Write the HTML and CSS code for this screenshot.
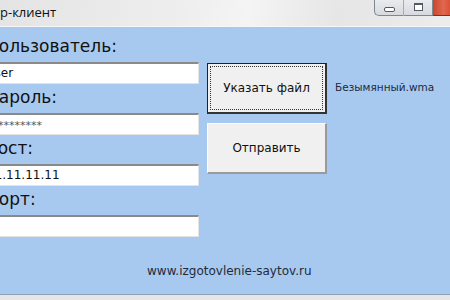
FILE: index.html
```html
<!DOCTYPE html>
<html lang="ru">
<head>
<meta charset="utf-8">
<link rel="stylesheet" href="styles.css">
</head>
<body>
<div class="window">
  <div class="titlebar">
    <div class="title">р-клиент</div>
    <div class="controls">
      <div class="ctl ctl-min"><span class="min-icon"></span></div>
      <div class="ctl ctl-max"><span class="max-icon"></span></div>
      <div class="ctl ctl-close"></div>
    </div>
  </div>
  <div class="client">
    <div class="main">
      <div class="form">
        <div class="label">Пользователь:</div>
        <div class="input">user</div>
        <div class="label">Пароль:</div>
        <div class="input pass">**********</div>
        <div class="label">Хост:</div>
        <div class="input">11.11.11.11</div>
        <div class="label">Порт:</div>
        <div class="input"></div>
      </div>
      <div class="buttons">
        <div class="btn btn-focus"><span class="focus-ring">Указать файл</span></div>
        <div class="btn">Отправить</div>
      </div>
      <div class="file">Безымянный.wma</div>
    </div>
    <div class="site">www.izgotovlenie-saytov.ru</div>
  </div>
  <div class="bottom"></div>
</div>
</body>
</html>
```

FILE: styles.css
```css
html, body {
  margin: 0;
  padding: 0;
  width: 450px;
  height: 300px;
  overflow: hidden;
  background: #e8e8e8;
}
.window {
  width: 450px;
  height: 300px;
  display: flex;
  flex-direction: column;
  font-family: "DejaVu Sans", Tahoma, sans-serif;
  color: #111;
}
.titlebar {
  height: 27px;
  flex: none;
  display: flex;
  justify-content: space-between;
  align-items: flex-start;
  background: linear-gradient(100deg, #e4e4e4 0%, #eeeeee 40%, #f4f4f4 55%, #e6e6e6 75%, #ececec 100%);
  border-bottom: 1px solid #f6f6f6;
  box-sizing: border-box;
}
.title {
  font-family: "Open Sans", sans-serif;
  font-size: 13px;
  line-height: 27px;
  color: #111;
  padding-left: 0;
  margin-top: -1px;
}
.controls {
  display: flex;
  height: 16px;
}
.ctl {
  height: 16px;
  box-sizing: border-box;
  display: flex;
  align-items: center;
  justify-content: center;
}
.ctl-min {
  width: 30px;
  border: 1px solid #7f8793;
  border-top: none;
  border-right: 1px solid #a5abb4;
  border-bottom-left-radius: 5px;
  background: linear-gradient(#e9ebee, #d6d9de);
}
.ctl-max {
  width: 29px;
  border-bottom: 1px solid #7f8793;
  border-right: 1px solid #7f8793;
  background: linear-gradient(#e9ebee, #d6d9de);
}
.ctl-close {
  width: 17px;
  background: linear-gradient(90deg, #c9462f, #e0674f 60%, #d85238);
  border-bottom: 1px solid #8b2a1c;
}
.min-icon {
  width: 9px;
  height: 3px;
  border: 1px solid #525a66;
  border-radius: 2px;
  background: #fff;
  margin-top: 4px;
}
.max-icon {
  width: 7px;
  height: 5px;
  border: 1px solid #525a66;
  border-top-width: 2px;
  background: #fff;
  margin-top: -1px;
}
.client {
  flex: 1;
  background: #a8c9ef;
  display: flex;
  flex-direction: column;
  border-bottom: 1px solid #8e9fb6;
}
.main {
  display: flex;
  align-items: flex-start;
}
.form {
  margin-left: -17px;
  width: 216px;
  padding-top: 6px;
  display: flex;
  flex-direction: column;
}
.label {
  font-size: 17px;
  height: 29px;
  line-height: 26px;
  padding-left: 3px;
  color: #111;
}
.input {
  height: 22px;
  box-sizing: border-box;
  background: #fff;
  border-top: 2px solid #8a8a8a;
  border-left: 2px solid #8a8a8a;
  border-right: 1px solid #e3e3e3;
  border-bottom: 1px solid #e3e3e3;
  font-family: "DejaVu Sans", sans-serif;
  font-size: 12px;
  line-height: 19px;
  padding-left: 2px;
  color: #111;
}
.input.pass {
  font-size: 11px;
  line-height: 21px;
  color: #555;
}
.buttons {
  margin-left: 8px;
  padding-top: 36px;
  display: flex;
  flex-direction: column;
  gap: 9px;
}
.btn {
  width: 120px;
  height: 51px;
  box-sizing: border-box;
  background: #f0f0f0;
  border: 1px solid #fdfdfd;
  border-right: 2px solid #9a9a9a;
  border-bottom: 2px solid #9a9a9a;
  display: flex;
  align-items: center;
  justify-content: center;
  font-family: "DejaVu Sans", sans-serif;
  font-size: 12px;
  color: #111;
}
.btn-focus {
  border: 1px solid #222;
  border-right: 2px solid #333;
  border-bottom: 2px solid #333;
  padding: 2px;
}
.focus-ring {
  flex: 1;
  align-self: stretch;
  display: flex;
  align-items: center;
  justify-content: center;
  border: 1px dotted #333;
}
.file {
  margin-left: 8px;
  padding-top: 54px;
  font-family: "DejaVu Sans", sans-serif;
  font-size: 10.5px;
  color: #1b2940;
}
.site {
  margin-top: auto;
  margin-bottom: 16px;
  margin-left: 147px;
  font-family: "DejaVu Sans", sans-serif;
  font-size: 12px;
  color: #1f2b3a;
}
.bottom {
  height: 5px;
  flex: none;
  background: #e6e6e6;
}
```
